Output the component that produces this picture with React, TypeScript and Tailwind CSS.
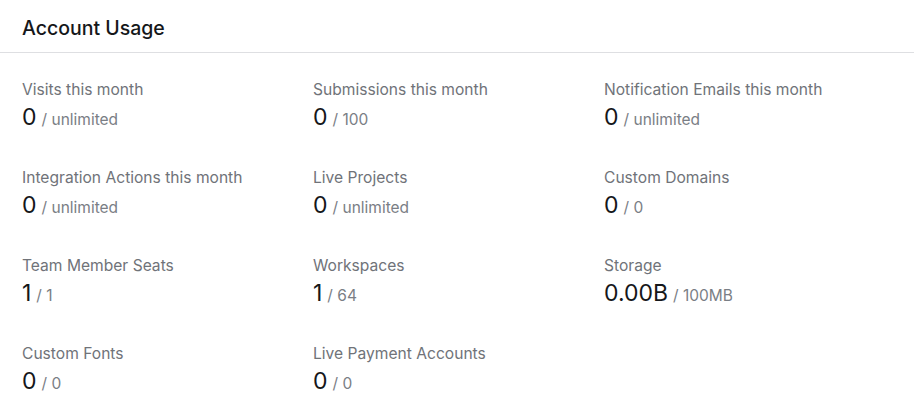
import React from "react";

const items: [string, string, string][] = [
  ["Visits this month", "0", "unlimited"],
  ["Submissions this month", "0", "100"],
  ["Notification Emails this month", "0", "unlimited"],
  ["Integration Actions this month", "0", "unlimited"],
  ["Live Projects", "0", "unlimited"],
  ["Custom Domains", "0", "0"],
  ["Team Member Seats", "1", "1"],
  ["Workspaces", "1", "64"],
  ["Storage", "0.00B", "100MB"],
  ["Custom Fonts", "0", "0"],
  ["Live Payment Accounts", "0", "0"],
];

export default function App() {
  return (
    <div
      className="w-[914px] h-[412px] bg-white overflow-hidden"
      style={{ fontFamily: "Inter, 'Noto Sans', sans-serif" }}
    >
      <div className="h-[53px] border-b border-[#dedfe2] px-[22px] pt-[14px]">
        <h2 className="text-[19.5px] leading-[28px] font-medium text-[#15171a]">
          Account Usage
        </h2>
      </div>
      <div className="grid grid-cols-[291px_291px_291px] gap-y-[36px] px-[22px] pt-[27px]">
        {items.map(([label, value, limit]) => (
          <div key={label} className="flex flex-col">
            <div className="h-[20px] text-[15.6px] leading-[20px] text-[#707379] whitespace-nowrap">
              {label}
            </div>
            <div className="mt-[3px] h-[29px] text-[23px] leading-[28px] whitespace-nowrap text-[#15171a]">
              <span className="leading-none">{value}</span>
              <span className="leading-none text-[15.5px] text-[#7a7e85] ml-[5px]">/ {limit}</span>
            </div>
          </div>
        ))}
      </div>
    </div>
  );
}
